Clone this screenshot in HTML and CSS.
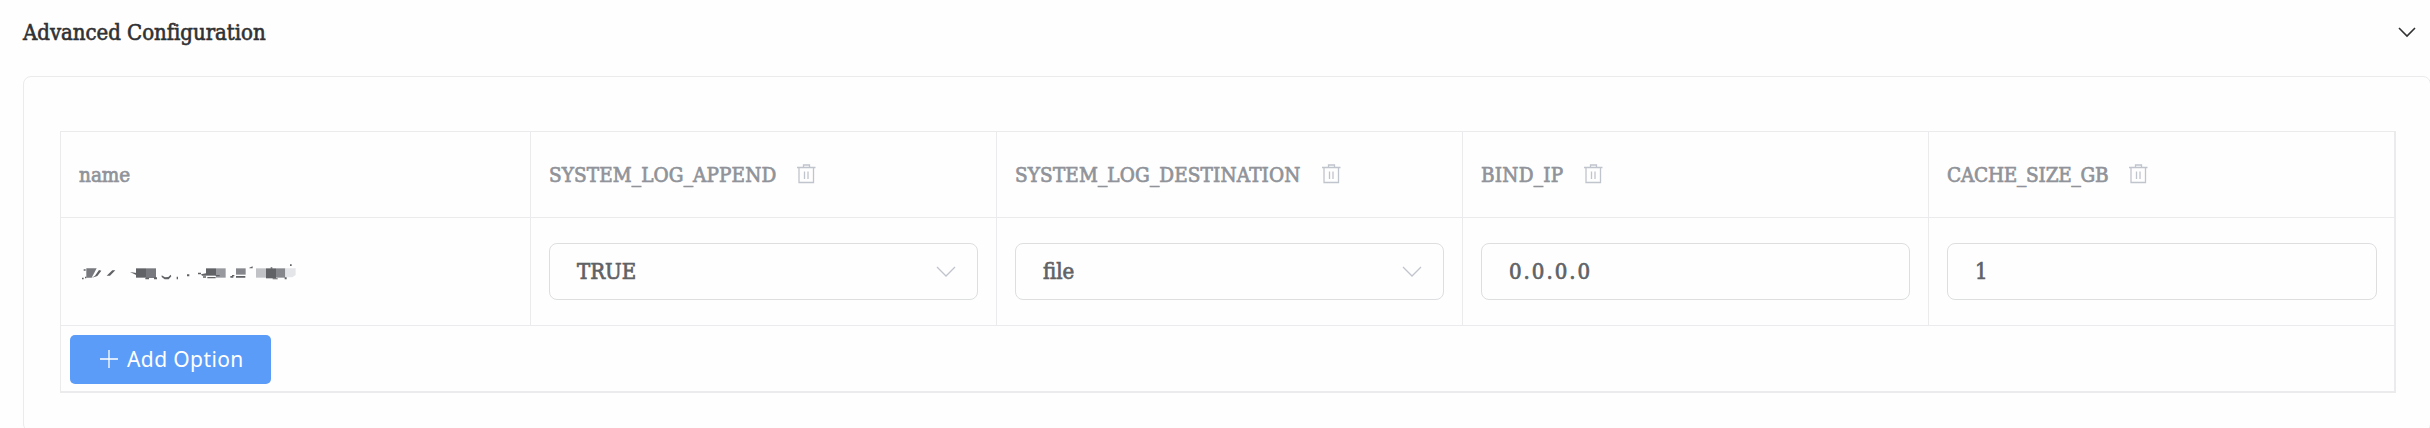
FILE: index.html
```html
<!DOCTYPE html>
<html lang="en">
<head>
<meta charset="utf-8">
<title>Advanced Configuration</title>
<link rel="stylesheet" href="styles.css">
</head>
<body>
<svg width="0" height="0" class="defs">
  <symbol id="trash" viewBox="0 0 19 20"><path d="M0 3.5H18.5M6.5 3.5V1H12.500V3.5M2 3.500V18.500H16.500V3.500M7.500 7.500V15M11 7.500V15" fill="none" stroke="currentColor" stroke-width="1.3"/></symbol>
  <symbol id="chevron" viewBox="0 0 20 12"><path d="M1 1L10 10L19 1" fill="none" stroke="currentColor" stroke-width="1.3"/></symbol>
</svg>
<header class="section-head">
  <h2 class="title">Advanced Configuration</h2>
  <svg class="toggle" viewBox="0 0 18 11"><path d="M1 1L9 9L17 1" fill="none" stroke="currentColor" stroke-width="1.6"/></svg>
</header>
<main class="card">
  <div class="table">
    <div class="cell head"><span class="name">name</span></div>
    <div class="cell head"><span class="append">SYSTEM_LOG_APPEND</span><svg class="trash"><use href="#trash"/></svg></div>
    <div class="cell head"><span class="destination">SYSTEM_LOG_DESTINATION</span><svg class="trash"><use href="#trash"/></svg></div>
    <div class="cell head"><span class="bind">BIND_IP</span><svg class="trash"><use href="#trash"/></svg></div>
    <div class="cell head last"><span class="cache">CACHE_SIZE_GB</span><svg class="trash"><use href="#trash"/></svg></div>
    <div class="cell row">
      <svg class="masked" viewBox="27 30 660 70">
        <g fill="#606266">
          <path fill="#77797e" d="M49 54H80L65 82H49Z"/><path d="M41 57h6v4h-6zM36 82h5v5h-5zM45 79h4v5h-4zM75 76L87 59L94 61L82 77L66 82ZM110 76L127 60H136L120 76ZM180 65L200 68V75Z"/>
          <path d="M198 54h30v28h-30z"/><path fill="#77797e" d="M228 54h30v29h-30z"/>
          <path d="M226 82h11v5h-11zM252 81h9v6h-9zM275 75L285 81L295 80L302 73L304 78L296 87H284L275 80ZM320 79h4v8h-4zM351 72h7v6h-7zM384 67h9v5h-9zM393 72L408 69V76H396Z"/>
          <path d="M408 54h30v22h-30z"/><path fill="#97999e" d="M438 54h29v28h-29z"/><path d="M399 78h9v4h-9zM412 80h25v4h-25zM437 74h12v4h-12zM481 77h9v5h-9zM486 74h7v4h-7z"/>
          <path fill="#85878c" d="M498 54h29v19h-29z"/><path d="M498 77h28v5h-28zM538 52L548 48V54H538Z"/>
          <path fill="#c1c2c6" d="M558 54h30v28h-30z"/><path d="M588 54h30v30h-30z"/><path fill="#85878c" d="M618 54h28v28h-28z"/><path fill="#e4e5e8" d="M646 54h31v20l-10 7h-21z"/><path d="M608 84h15v3h-15zM644 81h6v6h-6zM660 42h5v5h-5zM602 51h5v4h-5z"/>
        </g>
      </svg>
    </div>
    <div class="cell row"><div class="field"><span class="true">TRUE</span><svg class="chevron"><use href="#chevron"/></svg></div></div>
    <div class="cell row"><div class="field"><span class="file">file</span><svg class="chevron"><use href="#chevron"/></svg></div></div>
    <div class="cell row"><div class="field"><span class="ip">0.0.0.0</span></div></div>
    <div class="cell row last"><div class="field"><span class="one">1</span></div></div>
    <div class="foot">
      <button class="add"><svg class="plus" viewBox="0 0 18 18"><path d="M9 0V18M0 9H18" stroke="currentColor" stroke-width="1.3"/></svg><span>Add Option</span></button>
    </div>
  </div>
</main>
</body>
</html>
```
FILE: styles.css
```css
* { box-sizing: border-box; }
body {
  margin: 0;
  height: 428px;
  overflow: hidden;
  background: #fefefe;
  font-family: "DejaVu Serif Condensed", "DejaVu Serif", serif;
  font-stretch: condensed;
}
.defs { display: block; }
.section-head {
  display: flex;
  align-items: center;
  justify-content: space-between;
  height: 64px;
  padding: 0 14px 0 23px;
}
.title { margin: 0; font-size: 22px; font-weight: 400; letter-spacing: -0.04px; color: #303133; -webkit-text-stroke: 0.6px; white-space: nowrap; }
.toggle { width: 18px; height: 11px; color: #303133; }
.card {
  width: 2408px;
  height: 356px;
  margin: 12px 0 0 23px;
  padding: 54px 0 0 36px;
  border: 1px solid #ebebed;
  border-radius: 8px;
}
.table {
  display: grid;
  grid-template-columns: 470px 466px 466px 466px 467px;
  grid-template-rows: 86px 108px 67px;
  width: 2336px;
  border-top: 1px solid #ebebed;
  border-left: 1px solid #ebebed;
}
.cell {
  display: flex;
  align-items: center;
  padding: 0 18px;
  border-right: 1px solid #ebebed;
  border-bottom: 1px solid #ebebed;
}
.cell.last { border-right-width: 2px; padding-right: 17px; }
.head { color: #909399; font-size: 20.5px; gap: 21px; white-space: nowrap; -webkit-text-stroke: 0.7px; }
.append { letter-spacing: 0.13px; }
.destination { letter-spacing: 0.15px; }
.bind { letter-spacing: 0.25px; }
.cache { letter-spacing: -0.2px; }
.trash { width: 19px; height: 20px; margin-bottom: 2px; color: #c0c4cc; -webkit-text-stroke: 0; flex: none; }
.field {
  display: flex;
  align-items: center;
  justify-content: space-between;
  width: 100%;
  height: 57px;
  padding: 0 21px 0 27px;
  border: 1px solid #dddee0;
  border-radius: 8px;
  color: #606266;
  font-size: 22px;
  -webkit-text-stroke: 0.7px;
}
.ip { letter-spacing: 2px; }
.chevron { width: 20px; height: 12px; color: #c0c4cc; -webkit-text-stroke: 0; }
.masked { width: 220px; height: 24px; }
.foot {
  grid-column: 1 / -1;
  padding: 9px;
  border-right: 2px solid #ebebed;
  border-bottom: 2px solid #ebebed;
}
.add {
  display: flex;
  align-items: center;
  gap: 9px;
  width: 201px;
  height: 49px;
  padding: 0 0 1px 30px;
  border: 0;
  border-radius: 5px;
  background: #5b9cf8;
  color: #fff;
  font-family: "Noto Sans", sans-serif;
  font-size: 21px;
  letter-spacing: 0.4px;
  white-space: nowrap;
}
.plus { width: 18px; height: 18px; }
```
